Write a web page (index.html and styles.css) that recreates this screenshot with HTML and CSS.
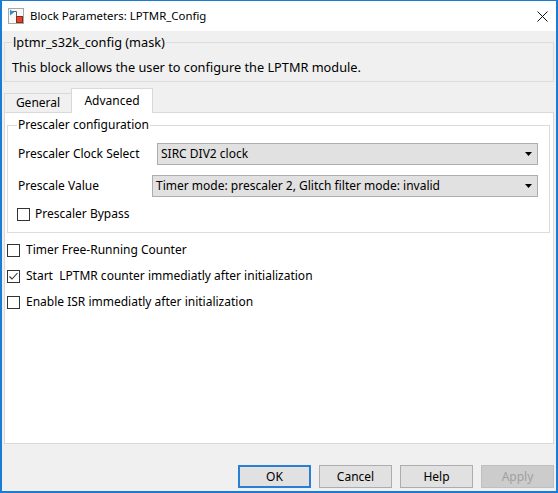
FILE: index.html
```html
<!DOCTYPE html>
<html>
<head>
<meta charset="utf-8">
<title>Block Parameters: LPTMR_Config</title>
<link rel="stylesheet" href="styles.css">
</head>
<body>
<div class="window">
  <div class="titlebar">
    <svg class="app-icon" width="16" height="16" viewBox="0 0 16 16">
      <rect x="0.5" y="0.5" width="15" height="15" fill="#f7f7f7" stroke="#a8a8a8"/>
      <path d="M4 3.5 H8.5 V8" fill="none" stroke="#606060" stroke-width="1"/>
      <polygon points="2,1.5 2,7.5 6,4.5" fill="#2d8fd8"/>
      <rect x="8.5" y="8.5" width="6" height="6" fill="#e0452c" stroke="#8a2a1c"/>
    </svg>
    <span class="title">Block Parameters: LPTMR_Config</span>
    <svg class="close" width="11" height="11" viewBox="0 0 11 11">
      <path d="M0.5 0.5 L10.5 10.5 M10.5 0.5 L0.5 10.5" stroke="#111" stroke-width="1"/>
    </svg>
  </div>
  <div class="content">
    <fieldset class="mask">
      <legend>lptmr_s32k_config (mask)</legend>
      <p class="desc">This block allows the user to configure the LPTMR module.</p>
    </fieldset>
    <div class="tabs">
      <div class="tab tab-general">General</div>
      <div class="tab tab-active">Advanced</div>
    </div>
    <div class="panel">
      <fieldset class="group">
        <legend>Prescaler configuration</legend>
        <div class="group-body">
          <div class="field">
            <span class="label label-clock">Prescaler Clock Select</span>
            <div class="select">
              <span class="select-text">SIRC DIV2 clock</span>
              <svg class="arrow" width="7" height="4" viewBox="0 0 7 4"><polygon points="0,0 7,0 3.5,4" fill="#000"/></svg>
            </div>
          </div>
          <div class="field">
            <span class="label label-value">Prescale Value</span>
            <div class="select">
              <span class="select-text">Timer mode: prescaler 2, Glitch filter mode: invalid</span>
              <svg class="arrow" width="7" height="4" viewBox="0 0 7 4"><polygon points="0,0 7,0 3.5,4" fill="#000"/></svg>
            </div>
          </div>
          <label class="check-row check-inner">
            <span class="box"></span>
            <span>Prescaler Bypass</span>
          </label>
        </div>
      </fieldset>
      <div class="checks">
        <label class="check-row">
          <span class="box"></span>
          <span>Timer Free-Running Counter</span>
        </label>
        <label class="check-row">
          <span class="box"><svg width="11" height="11" viewBox="0 0 11 11"><path d="M1.5 5.5 L4 8 L9.5 2" fill="none" stroke="#333" stroke-width="1.1"/></svg></span>
          <span>Start&nbsp; LPTMR counter immediatly after initialization</span>
        </label>
        <label class="check-row">
          <span class="box"></span>
          <span>Enable ISR immediatly after initialization</span>
        </label>
      </div>
    </div>
    <div class="buttons">
      <button class="btn btn-default">OK</button>
      <button class="btn">Cancel</button>
      <button class="btn">Help</button>
      <button class="btn btn-disabled">Apply</button>
    </div>
  </div>
</div>
</body>
</html>
```
FILE: styles.css
```css
html, body {
  margin: 0;
  padding: 0;
  background: #ffffff;
}

body {
  font-family: "Noto Sans", "DejaVu Sans", sans-serif;
  font-size: 12px;
  line-height: 16px;
  color: #000;
}

.window {
  width: 558px;
  height: 493px;
  box-sizing: border-box;
  border: 2px solid #1c7bd3;
  border-top-width: 1px;
  display: flex;
  flex-direction: column;
  background: #f0f0f0;
}

.titlebar {
  height: 30px;
  flex: none;
  background: #fff;
  display: flex;
  align-items: center;
  padding-left: 6px;
  padding-right: 8px;
}

.app-icon {
  flex: none;
}

.title {
  flex: 1;
  margin-left: 6px;
  font-size: 11.4px;
}

.close {
  flex: none;
}

.content {
  flex: 1;
  display: flex;
  flex-direction: column;
  padding: 3px 2px 0;
  min-height: 0;
}

fieldset {
  margin: 0;
  min-width: 0;
}

legend {
  padding: 0 1px;
  line-height: 16px;
}

.mask {
  border: 1px solid #dcdcdc;
  padding: 9px 7px 6px;
  font-size: 12.75px;
}

.desc {
  margin: 0;
}

.tabs {
  flex: none;
  display: flex;
  align-items: flex-end;
  height: 24px;
  margin-top: 6px;
}

.tab {
  box-sizing: border-box;
  display: flex;
  align-items: center;
  justify-content: center;
  border: 1px solid #d9d9d9;
  border-bottom: none;
}

.tab-general {
  width: 67px;
  height: 19px;
  border-right: none;
  background: #f0f0f0;
}

.tab-active {
  width: 82px;
  height: 25px;
  margin-bottom: -1px;
  background: #fff;
  position: relative;
  z-index: 1;
  padding-bottom: 1px;
}

.panel {
  flex: 1;
  border: 1px solid #d9d9d9;
  background: #fff;
  padding: 4px 3px 0 2px;
  min-height: 0;
}

.group {
  border: 1px solid #dcdcdc;
  padding: 10px 11px 10px 10px;
}

.group legend {
  margin-left: -1px;
}

.group-body {
  display: flex;
  flex-direction: column;
}

.field {
  display: flex;
  align-items: center;
  height: 22px;
}

.field + .field {
  margin-top: 10px;
}

.label {
  flex: none;
}

.label-clock {
  width: 139px;
}

.label-value {
  width: 134px;
}

.select {
  flex: 1;
  box-sizing: border-box;
  height: 22px;
  border: 1px solid #adadad;
  background: #e1e1e1;
  display: flex;
  align-items: center;
  justify-content: space-between;
  padding: 0 5px 0 3px;
}

.arrow {
  flex: none;
}

.check-row {
  display: flex;
  align-items: center;
  height: 16px;
  gap: 6px;
}

.check-inner {
  margin-top: 9px;
  margin-left: -1px;
  gap: 5px;
}

.box {
  box-sizing: border-box;
  width: 13px;
  height: 13px;
  border: 1px solid #333;
  background: #fff;
  flex: none;
  display: flex;
  align-items: center;
  justify-content: center;
}

.box svg {
  display: block;
}

.checks {
  display: flex;
  flex-direction: column;
  gap: 10px;
  margin-top: 9px;
}

.buttons {
  flex: none;
  height: 47px;
  box-sizing: border-box;
  padding-top: 21px;
  display: flex;
  justify-content: flex-end;
  align-items: flex-start;
  gap: 8px;
}

.btn {
  width: 73px;
  height: 23px;
  box-sizing: border-box;
  border: 1px solid #adadad;
  background: #e1e1e1;
  font-family: inherit;
  font-size: 12px;
  color: #000;
  padding: 0;
  margin: 0;
}

.btn-default {
  border: 2px solid #2a7fd4;
}

.btn-disabled {
  background: #cccccc;
  border-color: #bfbfbf;
  color: #a0a0a0;
}
```
